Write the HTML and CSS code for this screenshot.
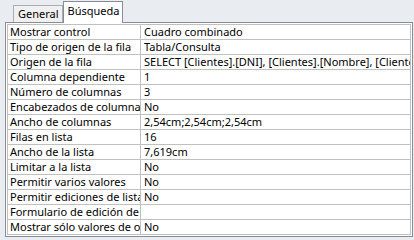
FILE: index.html
```html
<!DOCTYPE html>
<html lang="es">
<head>
<meta charset="utf-8">
<title>Hoja de propiedades</title>
<link rel="stylesheet" href="styles.css">
</head>
<body>
<div class="sheet">
  <div class="tabs">
    <div class="tab">General</div>
    <div class="tab active">Búsqueda</div>
  </div>
  <div class="panel">
    <div class="grid">
      <div class="row"><div class="lbl">Mostrar control</div><div class="val">Cuadro combinado</div></div>
      <div class="row"><div class="lbl">Tipo de origen de la fila</div><div class="val">Tabla/Consulta</div></div>
      <div class="row"><div class="lbl">Origen de la fila</div><div class="val">SELECT [Clientes].[DNI], [Clientes].[Nombre], [Clientes].[Apellidos] FROM Clientes;</div></div>
      <div class="row"><div class="lbl">Columna dependiente</div><div class="val">1</div></div>
      <div class="row"><div class="lbl">Número de columnas</div><div class="val">3</div></div>
      <div class="row"><div class="lbl">Encabezados de columna</div><div class="val">No</div></div>
      <div class="row"><div class="lbl">Ancho de columnas</div><div class="val">2,54cm;2,54cm;2,54cm</div></div>
      <div class="row"><div class="lbl">Filas en lista</div><div class="val">16</div></div>
      <div class="row"><div class="lbl">Ancho de la lista</div><div class="val">7,619cm</div></div>
      <div class="row"><div class="lbl">Limitar a la lista</div><div class="val">No</div></div>
      <div class="row"><div class="lbl">Permitir varios valores</div><div class="val">No</div></div>
      <div class="row"><div class="lbl">Permitir ediciones de lista</div><div class="val">No</div></div>
      <div class="row"><div class="lbl">Formulario de edición de elementos de lista</div><div class="val"></div></div>
      <div class="row"><div class="lbl">Mostrar sólo valores de origen de la fila</div><div class="val">No</div></div>
    </div>
  </div>
</div>
</body>
</html>
```

FILE: styles.css
```css
html, body {
  margin: 0;
  padding: 0;
  background: #e9ecf1;
}
body {
  font-family: "Noto Sans", "Liberation Sans", sans-serif;
  font-size: 11px;
  color: #000;
}
.sheet {
  padding: 1px 1px 0 5px;
}
.tabs {
  display: flex;
  align-items: flex-end;
  padding-left: 8px;
  height: 21px;
}
.tab {
  box-sizing: border-box;
  height: 17px;
  line-height: 16px;
  padding: 0 3px 0 4px;
  background: #f0f0f0;
  border: 1px solid #a9acb3;
  border-bottom: none;
  color: #000;
}
.tab.active {
  height: 22px;
  line-height: 18px;
  padding: 0 3px 0 4px;
  background: #fff;
  border-color: #898c95;
  margin-bottom: -1px;
  position: relative;
  z-index: 1;
}
.panel {
  border: 1px solid #898c95;
  background: #fff;
  padding: 1px;
  width: 404px;
}
.grid {
  border: 1px solid #c0c0c0;
  border-bottom: none;
}
.row {
  display: flex;
  box-sizing: border-box;
  height: 15px;
  line-height: 14px;
  border-bottom: 1px solid #c0c0c0;
}
.lbl {
  box-sizing: border-box;
  flex: 0 0 133px;
  padding-left: 2px;
  border-right: 1px solid #c0c0c0;
  white-space: nowrap;
  overflow: hidden;
}
.val {
  flex: 1 1 auto;
  min-width: 0;
  padding-left: 3px;
  white-space: nowrap;
  overflow: hidden;
}
```
